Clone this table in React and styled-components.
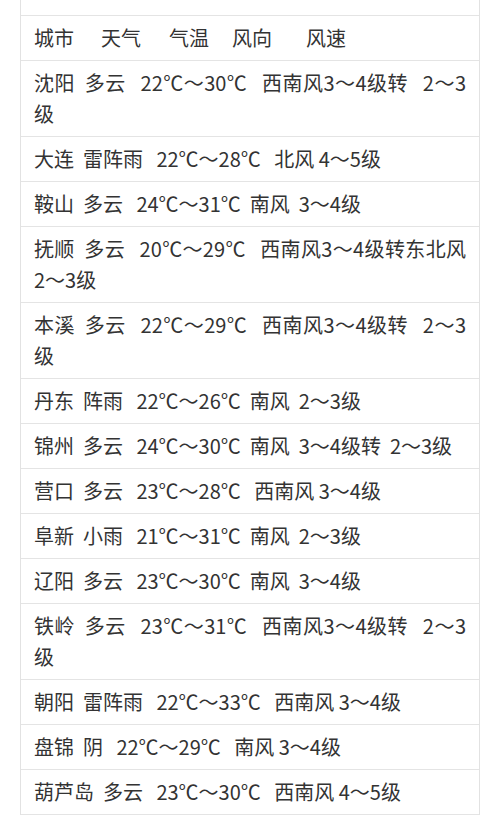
import React from "react";
import styled, { createGlobalStyle } from "styled-components";

const GlobalStyle = createGlobalStyle`
  html, body {
    margin: 0;
    padding: 0;
    background: #ffffff;
  }
  body {
    font-family: "Noto Sans CJK SC", Roboto, sans-serif;
  }
`;

const Page = styled.div`
  width: 500px;
  height: 824px;
  overflow: hidden;
  background: #ffffff;
  padding: 0 20px;
  box-sizing: border-box;
`;

const Table = styled.div`
  display: flex;
  flex-direction: column;
  border-left: 1px solid #e2e2e2;
  border-right: 1px solid #e2e2e2;
`;

const CutRow = styled.div`
  height: 15px;
  border-bottom: 1px solid #e4e4e4;
`;

const Row = styled.div`
  padding: 6.4px 13px 6.6px;
  border-bottom: 1px solid #e4e4e4;
  font-family: "Noto Sans CJK SC", Roboto, sans-serif;
  font-size: 20px;
  line-height: 31px;
  color: #333333;
  white-space: pre-wrap;
  text-align: justify;
  text-align-last: left;
`;

const HeaderRow = styled(Row)`
  display: flex;
  white-space: nowrap;
`;

const HeaderLabel = styled.span`
  margin-left: ${(p) => p.$gap || 0}px;
`;

const header = [
  { label: "城市", gap: 0 },
  { label: "天气", gap: 27 },
  { label: "气温", gap: 28 },
  { label: "风向", gap: 23 },
  { label: "风速", gap: 34 },
];

const rows = [
  "沈阳  多云   22℃～30℃   西南风3～4级转   2～3级",
  "大连  雷阵雨   22℃～28℃   北风 4～5级",
  "鞍山  多云   24℃～31℃  南风  3～4级",
  "抚顺  多云   20℃～29℃   西南风3～4级转东北风2～3级",
  "本溪  多云   22℃～29℃   西南风3～4级转   2～3级",
  "丹东  阵雨   22℃～26℃  南风  2～3级",
  "锦州  多云   24℃～30℃  南风  3～4级转  2～3级",
  "营口  多云   23℃～28℃   西南风 3～4级",
  "阜新  小雨   21℃～31℃  南风  2～3级",
  "辽阳  多云   23℃～30℃  南风  3～4级",
  "铁岭  多云   23℃～31℃   西南风3～4级转   2～3级",
  "朝阳  雷阵雨   22℃～33℃   西南风 3～4级",
  "盘锦  阴   22℃～29℃   南风 3～4级",
  "葫芦岛  多云   23℃～30℃   西南风 4～5级",
];

export default function App() {
  return (
    <>
      <GlobalStyle />
      <Page>
        <Table>
          <CutRow />
          <HeaderRow>
            {header.map((h) => (
              <HeaderLabel key={h.label} $gap={h.gap}>
                {h.label}
              </HeaderLabel>
            ))}
          </HeaderRow>
          {rows.map((r) => (
            <Row key={r}>{r}</Row>
          ))}
        </Table>
      </Page>
    </>
  );
}
